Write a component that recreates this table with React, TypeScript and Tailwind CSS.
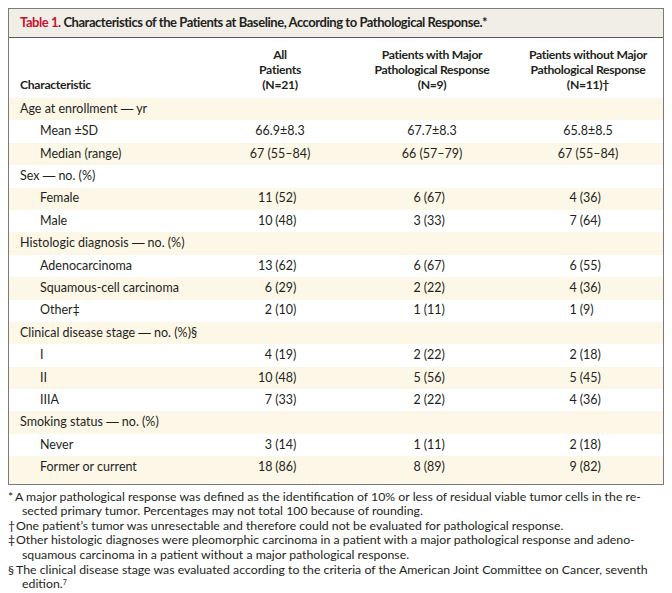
import React from "react";

type Row = { label: React.ReactNode; sub?: boolean; values?: [string, string, string] };

const Dash = () => <span className="font-['Liberation_Sans',sans-serif]">—</span>;

const rows: Row[] = [
  { label: <>Age at enrollment <Dash /> yr</> },
  { label: "Mean ±SD", sub: true, values: ["66.9±8.3", "67.7±8.3", "65.8±8.5"] },
  { label: "Median (range)", sub: true, values: ["67 (55–84)", "66 (57–79)", "67 (55–84)"] },
  { label: <>Sex <Dash /> no. (%)</> },
  { label: "Female", sub: true, values: ["11 (52)", "6 (67)", "4 (36)"] },
  { label: "Male", sub: true, values: ["10 (48)", "3 (33)", "7 (64)"] },
  { label: <>Histologic diagnosis <Dash /> no. (%)</> },
  { label: "Adenocarcinoma", sub: true, values: ["13 (62)", "6 (67)", "6 (55)"] },
  { label: "Squamous-cell carcinoma", sub: true, values: ["6 (29)", "2 (22)", "4 (36)"] },
  { label: "Other‡", sub: true, values: ["2 (10)", "1 (11)", "1 (9)"] },
  { label: <>Clinical disease stage <Dash /> no. (%)§</> },
  { label: "I", sub: true, values: ["4 (19)", "2 (22)", "2 (18)"] },
  { label: "II", sub: true, values: ["10 (48)", "5 (56)", "5 (45)"] },
  { label: "IIIA", sub: true, values: ["7 (33)", "2 (22)", "4 (36)"] },
  { label: <>Smoking status <Dash /> no. (%)</> },
  { label: "Never", sub: true, values: ["3 (14)", "1 (11)", "2 (18)"] },
  { label: "Former or current", sub: true, values: ["18 (86)", "8 (89)", "9 (82)"] },
];

// counts are lined up on the opening parenthesis
const Value = ({ v, col }: { v: string; col: number }) => {
  const m = v.match(/^(\d+) (\(\d+\))$/);
  if (!m) return <span>{v}</span>;
  return (
    <span className="inline-flex">
      <span className={col === 0 ? "w-[14px] text-right" : "w-[7px] text-right"}>{m[1]}</span>
      <span className="w-[30px] text-left">&nbsp;{m[2]}</span>
    </span>
  );
};

const cols = "grid grid-cols-[207px_128px_176px_136px]";

export default function App() {
  return (
    <div className="w-[672px] h-[593px] bg-white text-[#231f20] font-['Lato',sans-serif] overflow-hidden">
      <div className="pt-2 px-2">
        <div className="w-[656px] border border-[#7a7a7a]">
          <div className="h-[29px] bg-[#f1ede7] border-b border-[#5a5a5a] flex items-center pl-[11px] text-[13px] tracking-[-0.45px] font-bold">
            <span className="text-[#c8102e]">Table 1.</span>
            <span>&nbsp;Characteristics of the Patients at Baseline, According to Pathological Response.*</span>
          </div>
          <div className={`${cols} h-[60px] items-end pb-[6px] text-[12.2px] tracking-[-0.3px] font-bold leading-[15px]`}>
            <div className="pl-[11px]">Characteristic</div>
            <div className="text-center">All<br />Patients<br />(N=21)</div>
            <div className="text-center">Patients with Major<br />Pathological Response<br />(N=9)</div>
            <div className="text-center">Patients without Major<br />Pathological Response<br />(N=11)†</div>
          </div>
          {rows.map((r, i) => (
            <div
              key={i}
              className={`${cols} items-center text-[12.5px] ${i === rows.length - 1 ? "h-[27.4px] pb-[5px]" : "h-[22.4px]"} ${i % 2 === 0 ? "bg-[#fdf7e7]" : "bg-white"}`}
            >
              <div className={r.sub ? "pl-[31px]" : "pl-[11px]"}>{r.label}</div>
              {r.values?.map((v, j) => (
                <div key={j} className="text-center">
                  <Value v={v} col={j} />
                </div>
              ))}
            </div>
          ))}
        </div>
        <div className="mt-[5px] text-[12.3px] leading-[14.6px] whitespace-nowrap">
          <div className="flex">
            <span className="w-[7px]">*</span>
            <span>A major pathological response was defined as the identification of 10% or less of residual viable tumor cells in the re-</span>
          </div>
          <div className="pl-[14px]">sected primary tumor. Percentages may not total 100 because of rounding.</div>
          <div className="flex">
            <span className="w-[8px]">†</span>
            <span>One patient’s tumor was unresectable and therefore could not be evaluated for pathological response.</span>
          </div>
          <div className="flex">
            <span className="w-[8px]">‡</span>
            <span>Other histologic diagnoses were pleomorphic carcinoma in a patient with a major pathological response and adeno-</span>
          </div>
          <div className="pl-[14px]">squamous carcinoma in a patient without a major pathological response.</div>
          <div className="flex">
            <span className="w-[8px]">§</span>
            <span>The clinical disease stage was evaluated according to the criteria of the American Joint Committee on Cancer, seventh</span>
          </div>
          <div className="pl-[14px]">
            edition.<sup className="text-[7px]">7</sup>
          </div>
        </div>
      </div>
    </div>
  );
}
